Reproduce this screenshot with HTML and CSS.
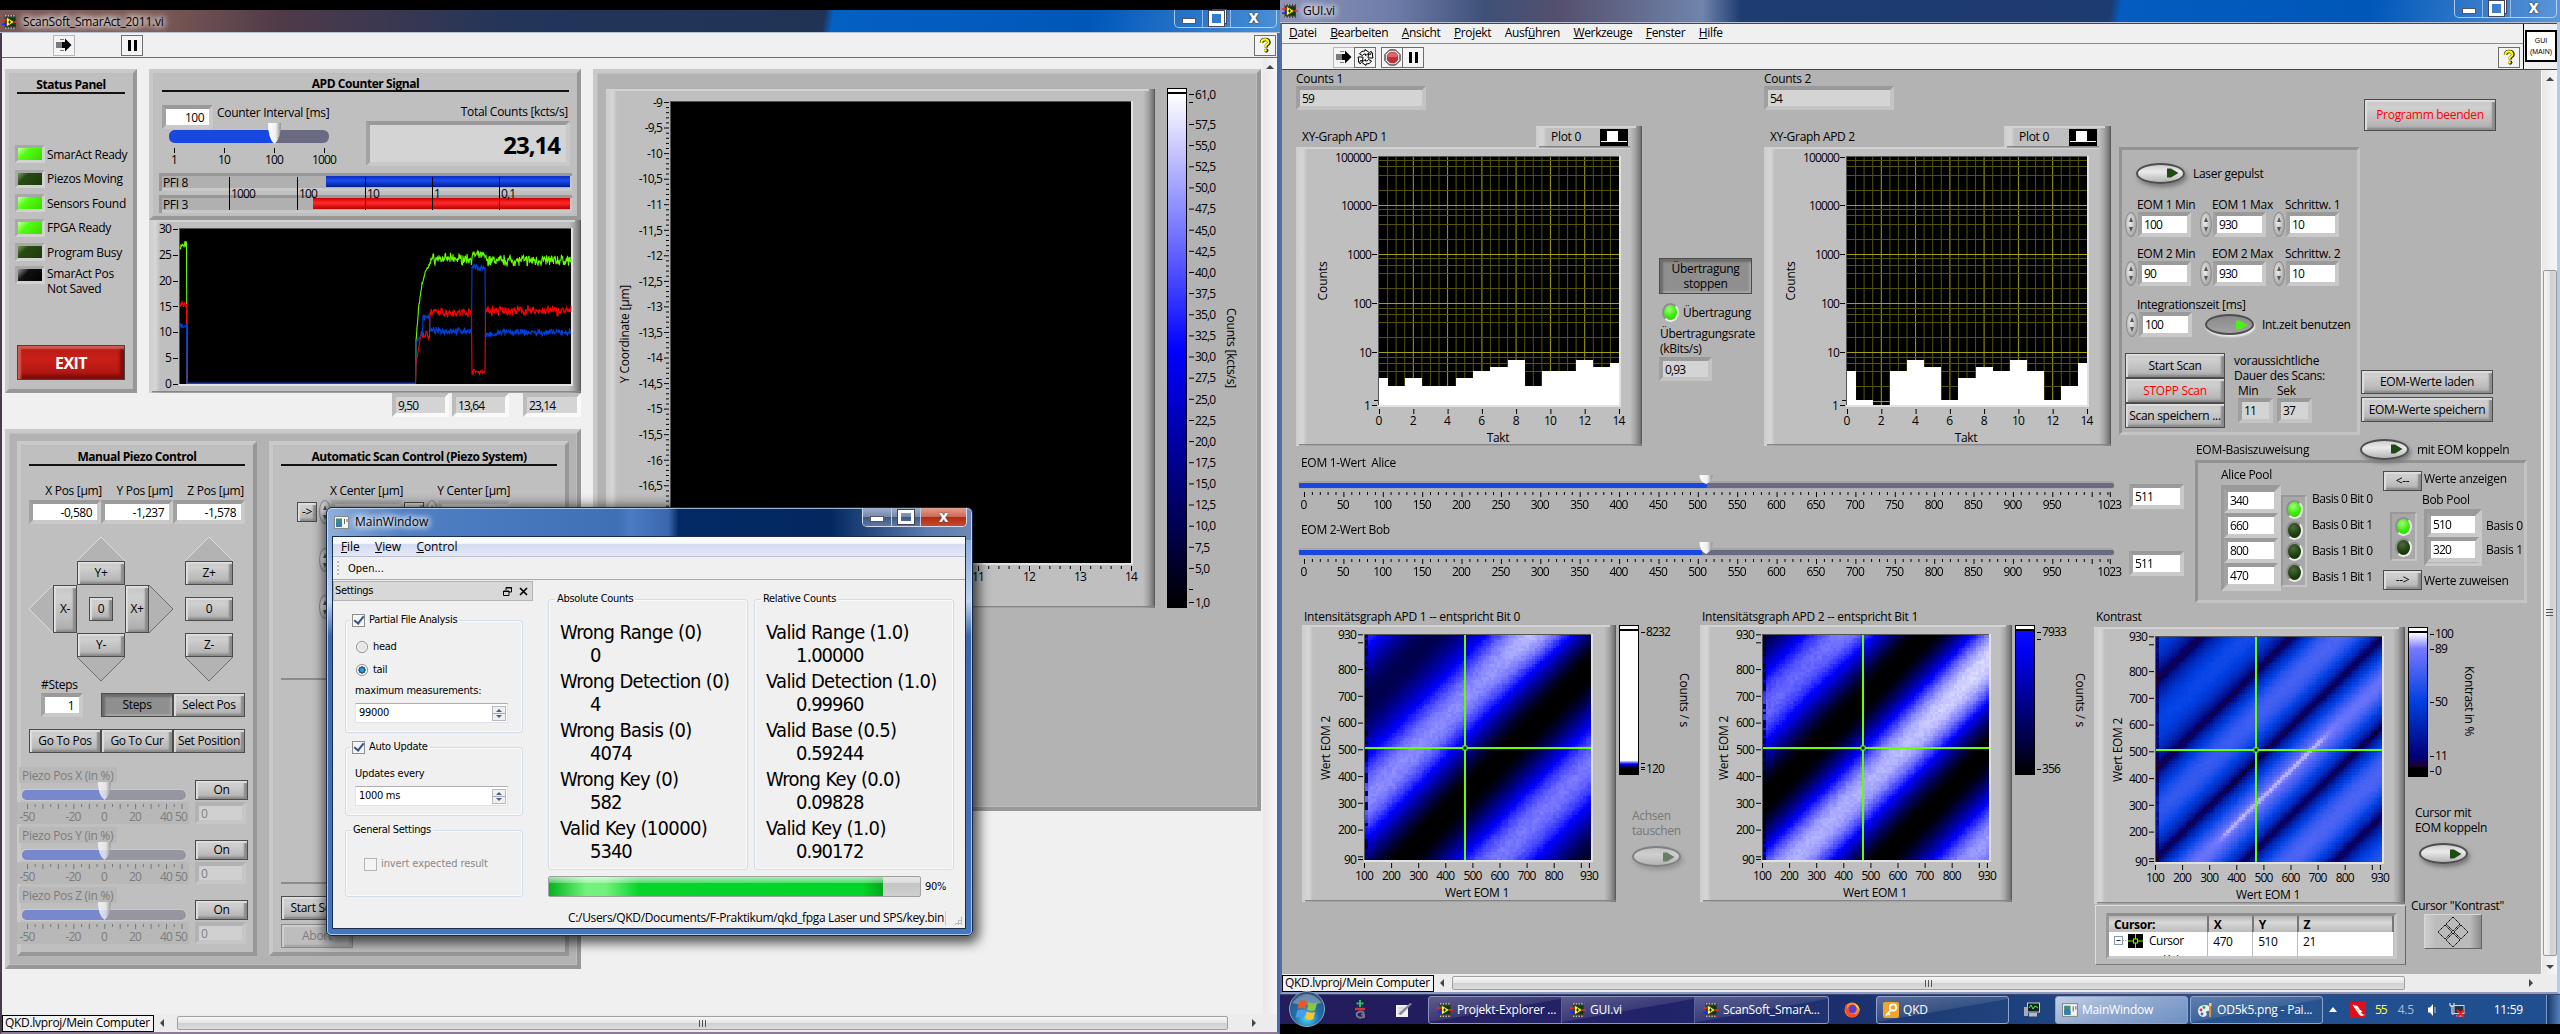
FILE: index.html
```html
<!DOCTYPE html>
<html lang="de">
<head>
<meta charset="utf-8">
<title>QKD Messplatz</title>
<link rel="stylesheet" href="styles.css">
</head>
<body>
<svg class="defs" width="0" height="0">
  <defs>
    <linearGradient id="frameL"><stop offset="0" stop-color="#cdcdcd"/><stop offset=".6" stop-color="#d6d6d6"/><stop offset="1" stop-color="#bfbfbf"/></linearGradient>
    <linearGradient id="frameR"><stop offset="0" stop-color="#bfbfbf"/><stop offset=".4" stop-color="#a6a6a6"/><stop offset=".85" stop-color="#787878"/><stop offset="1" stop-color="#505050"/></linearGradient>
    <linearGradient id="blueBar" x2="0" y2="1"><stop offset="0" stop-color="#0a2cc0"/><stop offset=".4" stop-color="#1c4cf0"/><stop offset="1" stop-color="#001f90"/></linearGradient>
    <linearGradient id="redBar" x2="0" y2="1"><stop offset="0" stop-color="#d00000"/><stop offset=".45" stop-color="#ff2a2a"/><stop offset="1" stop-color="#b80000"/></linearGradient>
    <linearGradient id="thumb"><stop offset="0" stop-color="#fff"/><stop offset=".6" stop-color="#f0f0f0"/><stop offset="1" stop-color="#8a8a8a"/></linearGradient>
    <linearGradient id="heatScale" x2="0" y2="1"><stop offset="0" stop-color="#fff"/><stop offset=".5" stop-color="#00f"/><stop offset="1" stop-color="#000"/></linearGradient>
    <linearGradient id="scaleBlue" x2="0" y2="1"><stop offset="0" stop-color="#0a0aff"/><stop offset=".15" stop-color="#0000f0"/><stop offset="1" stop-color="#000"/></linearGradient>
    <linearGradient id="scaleLow" x2="0" y2="1"><stop offset="0" stop-color="#fff"/><stop offset=".905" stop-color="#fff"/><stop offset=".93" stop-color="#00f"/><stop offset=".96" stop-color="#000"/><stop offset="1" stop-color="#000"/></linearGradient>
    <linearGradient id="scaleK" x2="0" y2="1"><stop offset="0" stop-color="#fff"/><stop offset=".11" stop-color="#7878ff"/><stop offset=".48" stop-color="#0040e0"/><stop offset=".86" stop-color="#000078"/><stop offset=".93" stop-color="#1c0038"/><stop offset=".94" stop-color="#000"/><stop offset="1" stop-color="#000"/></linearGradient>
    <radialGradient id="orb" cx=".5" cy=".75" r=".7"><stop offset="0" stop-color="#4fd8ff"/><stop offset=".5" stop-color="#1f6fa8"/><stop offset="1" stop-color="#30507c"/></radialGradient>
    <symbol id="vi" viewBox="0 0 16 16">
      <rect x="2.5" y="1" width="11.5" height="14" fill="#3a3a3a"/><path d="M3 1.8h11M3 14.2h11" stroke="#b8b8b8" stroke-width="1.6" stroke-dasharray="1.5 1.2"/>
      <rect x="7" y="4" width="6" height="8" fill="#0c3a0c"/>
      <path d="M4.5 3.2L12.4 8L4.5 12.8z" fill="#ff3" stroke="#330" stroke-width=".7"/><path d="M5.8 8h3.4M7.5 6.3v3.4" stroke="#222" stroke-width="1"/>
      <path d="M0 6h4.5M12 8h4" stroke="#f22" stroke-width="1.5"/><path d="M0 10.2h4.5" stroke="#22f" stroke-width="1.5"/>
    </symbol>
    <symbol id="run" viewBox="0 0 16 14"><path d="M1 4v6M3 4v6M5 1v1M5 4v6M5 12v1M7 1v1M7 12v1" stroke="#000" stroke-width="1"/><path d="M6 4h3V0.5L15.5 7L9 13.5V10H6z"/></symbol>
    <symbol id="help" viewBox="0 0 16 18"><path d="M4 6c0-3 2-4 4.5-4S13 3.500 12.500 6c-.3 1.800-2.500 2-3 3.200v2" fill="none" stroke="#222" stroke-width="4"/><circle cx="9.500" cy="14.800" r="2.400" fill="#222"/><path d="M3.800 6c0-3 2-4 4.300-4S12 3.500 11.800 6c-.3 1.800-2.600 2-3.200 3.200v1.800" fill="none" stroke="#ff0" stroke-width="2.400"/><circle cx="8.600" cy="14.500" r="1.500" fill="#ff0"/></symbol>
    <symbol id="app" viewBox="0 0 15 13"><rect x=".5" y=".5" width="14" height="12" fill="#f4f4f4" stroke="#888"/><rect x="2" y="2.500" width="6" height="8.500" fill="#3b8f7a"/><path d="M2 7l3-2 3 3v3H2z" fill="#3a7bb0"/><path d="M10.500 3v5M13 3v3" stroke="#666"/></symbol>
    <symbol id="toggleArrow" viewBox="0 0 14 12"><path d="M1 1.500L5 1.500L12.500 6L5 10.500L1 10.500z"/></symbol>
  </defs>
</svg>

<main class="desktop">
  <!-- ScanSoft window -->
  <section class="win scan">
    <header class="titlebar tb-left">
      <svg class="ico16"><use href="#vi"/></svg><span class="caption">ScanSoft_SmarAct_2011.vi</span>
      <div class="winbtns"><i class="min"></i><i class="res"></i><i class="cls">x</i></div>
    </header>
    <div class="toolbar">
      <b class="tool t-run soft"><svg width="16" height="14"><use href="#run"/></svg></b>
      <b class="tool t-pause"><i class="pause"></i></b>
      <b class="tool t-help"><svg width="14" height="17"><use href="#help"/></svg></b>
    </div>
    <div class="scan-body">
      <div class="scan-canvas">
        <div class="scan-left">
          <div class="row top-row">
            <div class="panel status">
              <h2>Status Panel</h2>
              <ul class="leds">
                <li><i class="led on"></i>SmarAct Ready</li>
                <li><i class="led"></i>Piezos Moving</li>
                <li><i class="led on"></i>Sensors Found</li>
                <li><i class="led on"></i>FPGA Ready</li>
                <li><i class="led"></i>Program Busy</li>
                <li class="two"><i class="led black"></i><span>SmarAct Pos<br>Not Saved</span></li>
              </ul>
              <button class="exit">EXIT</button>
            </div>
            <div class="apd-col">
              <div class="panel apd">
                <h2>APD Counter Signal</h2>
                <div class="row apd-row">
                  <div class="interval">
                    <div class="row"><span class="field white r w51">100</span><span class="lab">Counter Interval [ms]</span></div>
                    <svg id="intervalSlider" width="172" height="48"></svg>
                  </div>
                  <div class="total">
                    <span class="lab">Total Counts [kcts/s]</span>
                    <output class="field big">23,14</output>
                  </div>
                </div>
                <svg id="pfi" width="414" height="40"></svg>
              </div>
              <svg id="apdChart" width="432" height="173"></svg>
            </div>
          </div>
          <div class="row readouts">
            <output class="field lt w57">9,50</output><output class="field lt w57">13,64</output><output class="field lt w58 gap">23,14</output>
          </div>
          <div class="panel piezo">
            <div class="panel manual">
              <h2>Manual Piezo Control</h2>
              <div class="row pos-labels"><span>X Pos [µm]</span><span>Y Pos [µm]</span><span>Z Pos [µm]</span></div>
              <div class="row pos-fields"><span class="field white r">-0,580</span><span class="field white r">-1,237</span><span class="field white r">-1,578</span></div>
              <div class="pad">
                <svg class="a-yu" viewBox="0 0 48 24"><path d="M0 24L24 0L48 24"/></svg>
                <svg class="a-zu" viewBox="0 0 48 24"><path d="M0 24L24 0L48 24"/></svg>
                <button class="btn a-yp">Y+</button><button class="btn a-zp">Z+</button>
                <svg class="a-xl" viewBox="0 0 24 48"><path d="M24 0L0 24L24 48"/></svg>
                <button class="btn a-xm">X-</button><button class="btn a-o">0</button><button class="btn a-xp">X+</button>
                <svg class="a-xr" viewBox="0 0 24 48"><path d="M0 0L24 24L0 48"/></svg>
                <button class="btn a-z0">0</button>
                <button class="btn a-ym">Y-</button><button class="btn a-zm">Z-</button>
                <svg class="a-yd" viewBox="0 0 48 24"><path d="M0 0L24 24L48 0"/></svg>
                <svg class="a-zd" viewBox="0 0 48 24"><path d="M0 0L24 24L48 0"/></svg>
              </div>
              <div class="row steps-row">
                <label class="steps"><span>#Steps</span><span class="field white r">1</span></label>
                <button class="btn w72 pressed">Steps</button><button class="btn w72">Select Pos</button>
              </div>
              <div class="row go-row"><button class="btn w72">Go To Pos</button><button class="btn w72">Go To Cur</button><button class="btn w72">Set Position</button></div>
              <div class="piezo-sliders">
                <div class="row ps"><svg class="piezoSlider" data-axis="X" width="174" height="60"></svg><div class="ps-r"><button class="btn">On</button><span class="field dis">0</span></div></div>
                <div class="row ps"><svg class="piezoSlider" data-axis="Y" width="174" height="60"></svg><div class="ps-r"><button class="btn">On</button><span class="field dis">0</span></div></div>
                <div class="row ps"><svg class="piezoSlider" data-axis="Z" width="174" height="60"></svg><div class="ps-r"><button class="btn">On</button><span class="field dis">0</span></div></div>
              </div>
            </div>
            <div class="panel auto">
              <h2>Automatic Scan Control (Piezo System)</h2>
              <div class="row centers"><span>X Center [µm]</span><span>Y Center [µm]</span></div>
              <div class="row center-fields"><button class="btn">-&gt;</button><i class="spin"></i><span class="field dis"></span><button class="btn">-&gt;</button><i class="spin"></i><span class="field dis"></span></div>
              <i class="spin solo"></i><i class="spin solo two"></i>
              <hr><hr class="second">
              <button class="btn start">Start Scan</button>
              <button class="btn start off">Abort</button>
            </div>
          </div>
        </div>
        <div class="panel heat"><svg id="bigMap" width="660" height="734"></svg></div>
      </div>
      <div class="vscroll"><i class="up"></i></div>
    </div>
    <footer class="status-row"><span class="proj">QKD.lvproj/Mein Computer</span><i class="arr l"></i><i class="hthumb h1"></i><i class="arr r"></i></footer>
  </section>

  <!-- GUI window -->
  <section class="win gui">
    <header class="titlebar tb-right">
      <svg class="ico16"><use href="#vi"/></svg><span class="caption">GUI.vi</span>
      <div class="winbtns"><i class="min"></i><i class="res"></i><i class="cls">x</i></div>
    </header>
    <div class="gui-head">
      <div class="gui-bars">
        <nav class="menu"><span><u>D</u>atei</span><span><u>B</u>earbeiten</span><span><u>A</u>nsicht</span><span><u>P</u>rojekt</span><span>Ausf<u>ü</u>hren</span><span><u>W</u>erkzeuge</span><span><u>F</u>enster</span><span><u>H</u>ilfe</span></nav>
        <div class="toolbar g">
          <b class="tool soft"><svg width="16" height="14"><use href="#run"/></svg></b>
          <b class="tool"><svg width="17" height="17" viewBox="0 0 17 17" fill="none" stroke="#000" stroke-width="1"><path d="M2.500 5Q4 1.500 8 2V.5l4.500 3.200L8.500 6.500V5Q6.500 4.500 5.500 6.500zM14.500 12Q13 15.500 9 15v1.500L4.500 13.300 8.500 10.500V12Q10.500 12.500 11.500 10.500zM1 8h5l-.5 4-2-.5Q2 13.500 3.500 15 .5 13.500 1.500 10zM16 9h-5l.5-4 2 .5Q15 3.500 13.500 2 16.500 3.500 15.500 7z"/></svg></b>
          <b class="tool stop"><svg width="17" height="17" viewBox="0 0 17 17"><path d="M5.500 1h6L16 5.500v6L11.500 16h-6L1 11.500v-6z" fill="#fff" stroke="#000"/><path d="M6 2.800h5L14.200 6v5L11 14.200H6L2.800 11V6z" fill="#c03038"/><path d="M6 3.500h5L13.500 6v2h-10V6z" fill="#d86a6a"/></svg></b>
          <b class="tool"><i class="pause"></i></b>
          <b class="tool t-help"><svg width="14" height="17"><use href="#help"/></svg></b>
        </div>
      </div>
      <div class="vi-icon"><div>GUI<br>(MAIN)</div></div>
    </div>
    <div class="gui-body">
      <div class="gui-canvas">
        <div class="row g1">
          <div class="graph-col"><span class="lab">Counts 1</span><output class="field lt w130">59</output><svg id="xy1" width="347" height="320"></svg></div>
          <div class="transfer">
            <button class="btn pressed">Übertragung<br>stoppen</button>
            <span class="row"><i class="round on"></i>Übertragung</span>
            <p>Übertragungsrate<br>(kBits/s)</p>
            <output class="field lt">0,93</output>
          </div>
          <div class="graph-col"><span class="lab">Counts 2</span><output class="field lt w130">54</output><svg id="xy2" width="348" height="320"></svg></div>
          <div class="laser">
            <div class="row tg"><i class="toggle"><svg><use href="#toggleArrow"/></svg></i>Laser gepulst</div>
            <div class="triple labs"><span>EOM 1 Min</span><span>EOM 1 Max</span><span>Schrittw. 1</span></div>
            <div class="triple"><span class="num"><i class="spin"></i><b class="field white">100</b></span><span class="num"><i class="spin"></i><b class="field white">930</b></span><span class="num"><i class="spin"></i><b class="field white">10</b></span></div>
            <div class="triple labs l2"><span>EOM 2 Min</span><span>EOM 2 Max</span><span>Schrittw. 2</span></div>
            <div class="triple"><span class="num"><i class="spin"></i><b class="field white">90</b></span><span class="num"><i class="spin"></i><b class="field white">930</b></span><span class="num"><i class="spin"></i><b class="field white">10</b></span></div>
            <div class="triple labs l3"><span>Integrationszeit [ms]</span></div>
            <div class="row integ"><span class="num"><i class="spin"></i><b class="field white">100</b></span><i class="toggle down"><svg><use href="#toggleArrow"/></svg></i>Int.zeit benutzen</div>
            <div class="row scanrow">
              <div class="scanbtns"><button class="btn">Start Scan</button><button class="btn red">STOPP Scan</button><button class="btn">Scan speichern ...</button></div>
              <div class="dur"><p>voraussichtliche<br>Dauer des Scans:</p><div class="row"><label>Min<output class="field lt">11</output></label><label>Sek<output class="field lt">37</output></label></div></div>
            </div>
          </div>
          <div class="rightbtns"><button class="btn red quit">Programm beenden</button><button class="btn load">EOM-Werte laden</button><button class="btn save">EOM-Werte speichern</button></div>
        </div>
        <div class="row g2">
          <div class="eom">
            <div class="row"><svg class="eomSlider" data-label="EOM 1-Wert  Alice" data-h="9" width="833" height="67"></svg><span class="field white">511</span></div>
            <div class="row"><svg class="eomSlider" data-label="EOM 2-Wert Bob" data-h="12" width="833" height="67"></svg><span class="field white">511</span></div>
          </div>
          <div class="basis">
            <div class="row bhead"><span>EOM-Basiszuweisung</span><i class="toggle"><svg><use href="#toggleArrow"/></svg></i><span>mit EOM koppeln</span></div>
            <div class="row bpanel">
              <div class="alice"><span>Alice Pool</span><div class="cluster"><b class="field white">340</b><b class="field white">660</b><b class="field white">800</b><b class="field white">470</b></div></div>
              <div class="ledbox a4"><i class="round on"></i><i class="round"></i><i class="round"></i><i class="round"></i></div>
              <div class="blabs"><span>Basis 0 Bit 0</span><span>Basis 0 Bit 1</span><span>Basis 1 Bit 0</span><span>Basis 1 Bit 1</span></div>
              <div class="bob">
                <div class="row"><button class="btn">&lt;--</button><span>Werte anzeigen</span></div>
                <span class="bobt">Bob Pool</span>
                <div class="row bobrow"><div class="ledbox"><i class="round on"></i><i class="round"></i></div><div class="cluster"><b class="field white">510</b><b class="field white">320</b></div><div class="b2"><span>Basis 0</span><span>Basis 1</span></div></div>
                <div class="row zu"><button class="btn">--&gt;</button><span>Werte zuweisen</span></div>
              </div>
            </div>
          </div>
        </div>
        <div class="row g3">
          <div class="map" data-map="1"><svg class="base" width="315" height="298"></svg><canvas></canvas><svg class="over" width="315" height="298"></svg></div>
          <div class="side s1"><svg id="bar1" width="83" height="175"></svg><p class="dim">Achsen<br>tauschen</p><i class="toggle dimt"><svg><use href="#toggleArrow"/></svg></i></div>
          <div class="map" data-map="2"><svg class="base" width="313" height="298"></svg><canvas></canvas><svg class="over" width="313" height="298"></svg></div>
          <div class="side s2"><svg id="bar2" width="83" height="175"></svg></div>
          <div class="kcol">
            <div class="map" data-map="3"><svg class="base" width="312" height="299"></svg><canvas></canvas><svg class="over" width="312" height="299"></svg></div>
            <div class="ctable">
              <table><thead><tr><th>Cursor:</th><th>X</th><th>Y</th><th>Z</th></tr></thead>
              <tbody><tr><td><svg width="30" height="16"><rect x=".5" y="3.500" width="8" height="8" fill="#fff" stroke="#8a9ab0"/><path d="M2.500 7.500h4" stroke="#226"/><path d="M9 7.500h4" stroke="#999" stroke-dasharray="1 1"/><rect x="14" y="1" width="15" height="14"/><path d="M21.500 1v14M14 8h15" stroke="#6f0"/><rect x="19.500" y="6" width="4" height="4" stroke="#6f0"/></svg>Cursor</td><td>470</td><td>510</td><td>21</td></tr><tr class="cut"><td>Kein</td><td></td><td></td><td></td></tr></tbody></table>
            </div>
          </div>
          <div class="side s3"><svg id="bar3" width="90" height="180"></svg><p>Cursor mit<br>EOM koppeln</p><i class="toggle"><svg><use href="#toggleArrow"/></svg></i><p class="ck">Cursor "Kontrast"</p>
            <div class="cpad"><svg width="32" height="32" viewBox="0 0 32 32" fill="none" stroke="#000" stroke-dasharray="1.500 .5"><path d="M16 1l7 7-7 7-7-7zM16 17l7 7-7 7-7-7zM8 9l7 7-7 7-7-7zM24 9l7 7-7 7-7-7z"/></svg></div></div>
        </div>
      </div>
      <div class="vscroll g"><i class="up"></i><i class="vthumb"></i><i class="dn"></i></div>
    </div>
    <footer class="status-row g"><span class="proj">QKD.lvproj/Mein Computer</span><i class="arr l"></i><i class="hthumb h2"></i><i class="arr r"></i></footer>
  </section>

  <!-- Taskbar -->
  <footer class="taskbar">
    <svg class="orb" width="38" height="34" viewBox="0 0 38 34"><circle cx="19" cy="18" r="17.500" fill="url(#orb)" stroke="#8ab" stroke-width="1"/><path d="M4 12Q19-6 34 12Q19 16 4 12z" fill="#fff" opacity=".3"/><path d="M11 10.500q4-2.500 8 0l-1.500 7.500q-4-2-8 0z" fill="#e8562a"/><path d="M20.500 11q4 2.500 8.500.5l-1.700 7.500q-4 2-8.300-.5z" fill="#8cc63f"/><path d="M9.200 19.500q4-2 8 .3l-1.600 7.200q-4-2-8 0z" fill="#4a9be8"/><path d="M18.800 20.500q4 2.300 8.200.5l-1.500 7q-4 2-8.300-.5z" fill="#fdc22d"/></svg>
    <svg class="q1" width="14" height="20" viewBox="0 0 14 20"><path d="M7 0v7M3.500 3.500h7" stroke="#2fbf5f" stroke-width="2"/><path d="M2 9h10" stroke="#d33" stroke-width="2.500"/><path d="M11 13a4 3 0 1 0-1 4h1v-2.500H8" fill="none" stroke="#778" stroke-width="2"/></svg>
    <svg class="q2" width="18" height="16" viewBox="0 0 18 16"><rect x="1" y="3" width="12" height="12" fill="#f2f2f2"/><path d="M3 12L15 1l2 1L6 13z" fill="#889"/><path d="M3 6h6M3 9h4" stroke="#bbb"/></svg>
    <div class="tgroup"><span class="tb"><svg class="ico16"><use href="#vi"/></svg>Projekt-Explorer ...</span><span class="tb"><svg class="ico16"><use href="#vi"/></svg>GUI.vi</span><span class="tb"><svg class="ico16"><use href="#vi"/></svg>ScanSoft_SmarA...</span></div>
    <svg class="ff" width="16" height="16" viewBox="0 0 16 16"><circle cx="8" cy="8" r="7.500" fill="#ff8a1c"/><circle cx="8.500" cy="7" r="4.200" fill="#5b3fd0"/><path d="M1 4Q0 14 8 15.500Q15 15 15.500 8Q14 13 9 12Q4 11 5 7Q2 7 3 2z" fill="#ff4a2a"/><path d="M10 1q6 3 5.500 8-1-3-3-4z" fill="#ffd43a"/></svg>
    <span class="tb solo"><svg class="ico16" viewBox="0 0 16 16"><rect width="16" height="16" rx="2" fill="#f0a52c"/><circle cx="10" cy="5.500" r="3.200" fill="none" stroke="#fff" stroke-width="1.800"/><path d="M8 8l-5 5.500M5 11l1.800 1.800" stroke="#fff" stroke-width="1.800"/></svg>QKD</span>
    <svg class="mon" width="16" height="16" viewBox="0 0 16 16"><rect x="3.500" y="1" width="12" height="9" fill="#122" stroke="#ccc"/><path d="M5 6l2-3 2 4 2-3 3 2" stroke="#4f4" fill="none"/><rect x="0" y="5" width="4" height="9" fill="#aab"/><rect x="5" y="11" width="8" height="3.500" fill="#bbb"/></svg>
    <span class="tb solo act"><svg class="ico16"><use href="#app"/></svg>MainWindow</span>
    <span class="tb solo p"><svg class="ico16" viewBox="0 0 16 16"><path d="M1 9q0-6 7-6 5 0 5 4 0 2-3 2-2 1 0 3-1 3-4 3-5-1-5-6z" fill="#e8eef6"/><circle cx="4" cy="8" r="1.400" fill="#d33"/><circle cx="7" cy="5.500" r="1.400" fill="#2a2"/><circle cx="5" cy="12" r="1.400" fill="#36c"/><path d="M13 3v12" stroke="#e8902a" stroke-width="2"/><path d="M12 1h2.500v3H12z" fill="#fc6"/></svg>OD5k5.png - Pai...</span>
    <div class="tray"><i class="tri"></i><svg width="16" height="16" viewBox="0 0 16 16"><rect width="16" height="16" fill="#e10f1a"/><path d="M3 3l9 7M4 4q4 0 5 4t4 5q-3 1-4-2l-5-7" fill="none" stroke="#fff" stroke-width="1.300"/></svg><span class="ty">55</span><span class="tg2">4.5</span>
      <svg class="spk" width="9" height="14" viewBox="0 0 9 14"><path d="M1 4.500h2L6 1v12L3 9.500H1z" fill="#fff"/><path d="M8 4v6" stroke="#bcd"/></svg>
      <svg class="net" width="16" height="16" viewBox="0 0 16 16"><path d="M1 1v3h4V1M3 4v8h2" stroke="#fff" fill="none"/><rect x="5" y="3.500" width="10" height="8" fill="#234" stroke="#ddd"/><path d="M7 14h6" stroke="#ddd"/><path d="M8 8l7 7M15 8l-7 7" stroke="#e22" stroke-width="2"/></svg>
      <span class="clock">11:59</span><i class="show"></i></div>
  </footer>

  <!-- MainWindow -->
  <section class="mw">
    <header class="mw-title"><svg width="15" height="13"><use href="#app"/></svg><span class="caption">MainWindow</span><div class="mwbtns"><i class="min"></i><i class="max"></i><i class="cls">x</i></div></header>
    <div class="mw-client">
      <nav class="mw-menu"><span><u>F</u>ile</span><span><u>V</u>iew</span><span><u>C</u>ontrol</span></nav>
      <div class="mw-tool"><i class="grip"></i>Open...</div>
      <div class="mw-main">
        <aside class="dock">
          <div class="dock-title"><span>Settings</span><svg width="9" height="9" fill="none" stroke="#000" stroke-width="1"><path d="M3 3V.5h5.500V5H6M3 1h5.500M.5 4h5.500v4.500H.5zM.5 4.500h5.500"/></svg><svg width="9" height="9" stroke="#000" stroke-width="1.700"><path d="M1 1l7 7M8 1L1 8"/></svg></div>
          <fieldset class="fs1"><legend><i class="chk on"></i>Partial File Analysis</legend>
            <label class="rad"><i></i>head</label><label class="rad sel"><i></i>tail</label>
            <span class="ml">maximum measurements:</span><div class="spinbox">99000<i></i></div></fieldset>
          <fieldset class="fs2"><legend><i class="chk on"></i>Auto Update</legend><span class="ml">Updates every</span><div class="spinbox">1000 ms<i></i></div></fieldset>
          <fieldset class="fs3"><legend>General Settings</legend><label class="inv"><i class="chk"></i>invert expected result</label></fieldset>
        </aside>
        <div class="results">
          <div class="row groups">
            <fieldset><legend>Absolute Counts</legend><dl><dt>Wrong Range (0)</dt><dd>0</dd><dt>Wrong Detection (0)</dt><dd>4</dd><dt>Wrong Basis (0)</dt><dd>4074</dd><dt>Wrong Key (0)</dt><dd>582</dd><dt>Valid Key (10000)</dt><dd>5340</dd></dl></fieldset>
            <fieldset><legend>Relative Counts</legend><dl><dt>Valid Range (1.0)</dt><dd>1.00000</dd><dt>Valid Detection (1.0)</dt><dd>0.99960</dd><dt>Valid Base (0.5)</dt><dd>0.59244</dd><dt>Wrong Key (0.0)</dt><dd>0.09828</dd><dt>Valid Key (1.0)</dt><dd>0.90172</dd></dl></fieldset>
          </div>
          <div class="row prog"><div class="bar"><i style="width:90%"></i></div><span>90%</span></div>
        </div>
      </div>
      <footer class="mw-status"><span>C:/Users/QKD/Documents/F-Praktikum/qkd_fpga Laser und SPS/key.bin</span><i class="size"></i></footer>
    </div>
  </section>
</main>
<script src="script.js"></script>
</body>
</html>
```
FILE: styles.css
```css
* { box-sizing: border-box; }
body { margin: 0; background: #000; font: 12px/15px "Open Sans", "Noto Sans", sans-serif; letter-spacing: -.3px; color: #000; font-variant-ligatures: none; }
h2, p, ul, dl, dd, fieldset { margin: 0; padding: 0; }
ul { list-style: none; }
i { font-style: normal; flex: none; }
b { font-weight: 400; }
svg { display: block; flex: none; overflow: visible; }
svg text { font: 12px "Open Sans", "Noto Sans", sans-serif; letter-spacing: -.3px; white-space: pre; font-variant-ligatures: none; }
svg text.n { letter-spacing: -.85px; }
svg text.off { fill: #7c7c7c; }
.defs { position: absolute; }
.row { display: flex; }
span, label, legend, dt, dd, button { white-space: nowrap; }
.desktop { position: relative; width: 2560px; height: 1034px; overflow: hidden; background: #000; }
.win { position: absolute; display: flex; flex-direction: column; background: #f0f0f0; }
.scan { left: 0; top: 10px; width: 1280px; height: 1024px; border-left: 2px solid #4a3a4c; border-right: 3px solid #3d6fb4; border-bottom: 2px solid #8c7a96; }
.gui { left: 1280px; top: 0; width: 1280px; height: 994px; border-left: 2px solid #5a6c98; border-right: 3px solid #b8cbe6; border-bottom: 2px solid #8a9ac0; }
.ico16 { width: 16px; height: 16px; }

/* title bars */
.titlebar { flex: none; height: 23px; display: flex; align-items: flex-start; padding: 4px 0 0 0; border-bottom: 1px solid #b9c0d0; position: relative; }
.tb-left { margin-left: -2px; margin-right: -3px; padding-left: 2px; background: linear-gradient(100deg, transparent 64.3%, #0560c4 65%, #0057b8 85%, #4a90d8 100%), linear-gradient(90deg, #7a5a58 0, #7c5a56 12%, #4f3a48 22%, #22355a 40%, #20304e 100%); }
.tb-right { margin-left: -2px; margin-right: -3px; padding: 3px 0 0 2px; background: linear-gradient(100deg, transparent 64.8%, #045cc0 65.6%, #0057b8 85%, #5c96d8 100%), linear-gradient(90deg, #8d93b8 0, #6d7ca8 9%, #3f5078 16%, #55506e 22%, #7084ac 33%, #1f3c70 36%, #1c386c 100%); }
.caption { margin-left: 5px; font-size: 12px; line-height: 16px; letter-spacing: -.2px; text-shadow: 0 0 7px #fff, 0 0 7px #fff, 0 0 9px rgba(255,255,255,.8), 0 0 10px rgba(255,255,255,.7); }
.winbtns { margin: -4px 3px 0 auto; width: 103px; height: 18px; display: flex; border: 1px solid rgba(215,230,250,.75); border-top: 0; border-radius: 0 0 5px 5px; }
.tb-right .winbtns { margin-top: -3px; }
.winbtns i { display: flex; align-items: center; justify-content: center; color: #fff; border-right: 1px solid rgba(215,230,250,.6); width: 28px; }
.winbtns .cls { flex: 1; border: 0; font: 700 17px/12px "Open Sans", sans-serif; text-shadow: 0 0 2px #333, 0 0 1px #333; padding-bottom: 4px; }
.min::before { content: ""; width: 12px; height: 4px; margin-top: 4px; background: #fff; border: 1px solid #556; }
.res::before { content: ""; width: 9px; height: 9px; border: 3px solid #fff; outline: 1px solid #445; box-shadow: 3px -2px 0 -1px #fff, 3px -2px 0 0 #445; }

/* toolbars */
.toolbar { flex: none; height: 25px; display: flex; align-items: center; border-bottom: 1px solid #6c6c6c; background: #f1f0f0; }
.tool { width: 22px; height: 21px; border: 1px solid #6e6e6e; display: flex; align-items: center; justify-content: center; background: #f4f4f4; }
.tool.soft { border-color: #b8b8b8; }
.t-run { margin-left: 51px; }
.t-pause { margin-left: 46px; }
.t-help { margin-left: auto; margin-right: 1px; }
.pause { width: 9px; height: 11px; border: solid #000; border-width: 0 3px; }
.gui-head { flex: none; display: flex; height: 47px; border-top: 1px solid #2c4a7c; border-bottom: 1px solid #444; }
.gui-bars { flex: 1; display: flex; flex-direction: column; }
.menu { height: 21px; display: flex; align-items: center; padding: 0 0 2px 7px; border-bottom: 1px solid #8c8c8c; gap: 13.5px; letter-spacing: -.35px; }
.toolbar.g { height: 25px; border: 0; padding-left: 51px; padding-top: 1px; }
.toolbar.g .tool + .tool { margin-left: -1px; }
.toolbar.g .tool.stop { margin-left: 5px; }
.toolbar.g .tool.t-help { margin-left: auto; margin-right: 3px; }
.vi-icon { width: 34px; border-left: 1px solid #000; background: #f0f0f0; padding-top: 6px; }
.vi-icon div { width: 32px; height: 32px; margin-left: 1px; border: 2px solid #000; background: #fff; text-align: center; font: 7px/11px "Liberation Sans", sans-serif; padding-top: 3px; letter-spacing: 0; }

/* panels, fields and buttons */
.panel { border: 4px solid; border-color: #c9c9c9 #989898 #989898 #c9c9c9; background: #bfbfbf; box-shadow: inset 0 0 0 1px #bdbdbd; outline: 0; }
.panel h2 { flex: none; margin: 4px 8px 0; height: 17px; border-bottom: 2px solid #111; font-size: 12px; line-height: 15px; font-weight: 700; text-align: center; letter-spacing: -.43px; }
.field { display: block; height: 24px; border: 4px solid; border-color: #9a9a9a #c9c9c9 #c9c9c9 #a2a2a2; background: #d4d4d4; padding: 0 2px; line-height: 17px; letter-spacing: -.85px; flex: none; }
.field.white { background: #fff; }
.field.r { text-align: right; padding-right: 5px; letter-spacing: -.5px; }
.field.dis { background: #d0d0d0; color: #808080; border-color: #b2b2b2 #c6c6c6 #c6c6c6 #b2b2b2; }
.w51 { width: 51px; } .w57 { width: 57px; } .w58 { width: 58px; } .w72 { width: 72px; } .w130 { width: 130px; }
.btn { height: 24px; border: 1px solid #4c4c4c; border-radius: 0; padding: 0; background: linear-gradient(#c6c6c6, #cfcfcf 25%, #bababa 75%, #a8a8a8); box-shadow: inset 2px 2px 1px #dedede, inset -3px -2px 2px #8a8a8a; font: 12px/14px "Open Sans", sans-serif; font-variant-ligatures: none; letter-spacing: -.3px; text-align: center; color: #000; flex: none; }
.btn.pressed { background: #8f8f8f; box-shadow: inset 3px 3px 2px #6c6c6c, inset -2px -2px 2px #a5a5a5; }
.btn.red { color: #f00; }
.btn.off { color: #7d7d7d; border-color: #8a8a8a; box-shadow: inset 2px 2px 1px #cfcfcf, inset -3px -2px 2px #a5a5a5; background: #bdbdbd; }
.spin { width: 12px; height: 25px; background: radial-gradient(ellipse at 40% 40%, #eee, #a9a9a9 70%, #777); border-radius: 50%; border: 1px solid #8c8c8c; display: flex; flex-direction: column; align-items: center; justify-content: center; gap: 5px; }
.spin::before, .spin::after { content: ""; border: 2.5px solid transparent; border-top-width: 0; border-bottom: 5px solid #555; }
.spin::after { border-bottom: 0; border-top: 5px solid #555; }
.round { width: 17px; height: 19px; border-radius: 50%; border: 2px solid #8e8e8e; border-right-color: #eee; border-bottom-color: #eee; background: radial-gradient(circle at 40% 30%, #4a6a3a, #1c3c0c 60%, #102800); }
.round.on { background: radial-gradient(circle at 40% 30%, #a0ff80, #3fee08 50%, #28c800); }
.toggle { width: 49px; height: 21px; border-radius: 50%; border: 2px solid #4e4e4e; background: linear-gradient(#cfcfcf, #eaeaea 40%, #b5b5b5); box-shadow: 2px 3px 4px #777; display: flex; align-items: center; justify-content: flex-end; padding-right: 3px; }
.toggle svg { width: 14px; height: 12px; fill: #1f4a14; }
.toggle.down { background: linear-gradient(#8a8a8a, #a2a2a2); box-shadow: 1px 2px 2px #eee; }
.toggle.down svg { fill: #4cf014; }
.toggle.dimt { opacity: .5; }

/* ScanSoft front panel */
.scan-body { flex: 1; display: flex; min-height: 0; }
.scan-canvas { width: 1261px; display: flex; padding: 11px 0 0 3px; gap: 12px; align-items: flex-start; }
.scan-left { width: 576px; }
.top-row { gap: 12px; }
.status { width: 132px; height: 324px; display: flex; flex-direction: column; }
.leds { margin: 48px 0 0 6px; }
.leds li { height: 24.5px; display: flex; align-items: center; gap: 2px; }
.leds .two { align-items: flex-start; padding-top: 1px; }
.led { width: 30px; height: 18px; border: 3px solid; border-color: #a8a8a8 #d2d2d2 #d2d2d2 #a8a8a8; background: linear-gradient(135deg, #6b8d55 5%, #2a4a14 30%, #1c3a08); }
.led.on { background: linear-gradient(135deg, #baff9a 5%, #52ff10 35%, #3cd800); }
.led.black { background: linear-gradient(135deg, #888 5%, #111 35%, #000); }
.exit { margin: auto 8px 9px; width: 108px; height: 35px; flex: none; border: 1px solid #444; background: linear-gradient(#b51a14, #c81f18 40%, #a91410); box-shadow: inset 3px 3px 2px #cf5a50, inset -4px -4px 3px #7c0d0a; color: #fff; font: 700 16px/20px "Open Sans", sans-serif; letter-spacing: -.6px; padding: 0; }
.apd { width: 432px; height: 151px; display: flex; flex-direction: column; }
.apd h2 { margin-top: 3px; margin-left: 9px; margin-right: 8px; height: 16px; }
.apd-row { height: 81px; }
.interval { width: 208px; padding: 13px 0 0 9px; }
.interval .lab { margin-left: 4px; }
.interval svg { margin-top: -9px; margin-left: 5px; }
.total { width: 204px; margin-left: auto; margin-right: 7px; display: flex; flex-direction: column; padding-top: 12px; }
.total .lab { align-self: flex-end; margin-right: 2px; }
.big { height: 45px; margin-top: 2px; text-align: right; font-weight: 700; font-size: 24px; line-height: 40px; padding-right: 6px; letter-spacing: -1px; }
#pfi { margin: 0 0 0 6px; }
.readouts { justify-content: flex-end; gap: 3px; height: 24px; }
.readouts .gap { margin-left: 11px; }
.lt { border-color: #a8a8a8 #e0e0e0 #e0e0e0 #a8a8a8; }
.readouts .lt { border-color: #bcbcbc #fafafa #fafafa #bcbcbc; line-height: 18px; }
.gui .lt { border-color: #999 #c4c4c4 #c4c4c4 #a0a0a0; }
.piezo { margin-top: 12px; height: 540px; padding: 8px; display: flex; gap: 12px; background: #b3b3b3; }
.piezo .panel { height: 515px; display: flex; flex-direction: column; }
.manual { width: 240px; }
.pos-labels { margin: 17px 0 2px 10px; }
.pos-labels span { width: 71px; text-align: right; }
.pos-fields { margin-left: 8px; }
.pos-fields span { width: 72px; }
.pad { margin: 13px 0 0 8px; display: grid; grid-template-columns: 24px 24px 48px 24px 24px 12px 48px; grid-template-rows: 24px 24px 48px 24px 24px; }
.pad svg { width: 100%; height: 100%; fill: #b3b3b3; stroke: #dcdcdc; stroke-width: 1; }
.pad .a-yd, .pad .a-zd, .pad .a-xr { stroke: #6d6d6d; }
.pad .btn { width: 100%; }
.a-yu { grid-area: 1/3; } .a-zu { grid-area: 1/7; } .a-yp { grid-area: 2/3; } .a-zp { grid-area: 2/7; }
.a-xl { grid-area: 3/1; } .pad .a-xm { grid-area: 3/2; height: 48px; } .pad .a-xp { grid-area: 3/4; height: 48px; } .a-xr { grid-area: 3/5; }
.pad .a-o { grid-area: 3/3; width: 24px; place-self: center; } .a-z0 { grid-area: 3/7; align-self: center; }
.a-ym { grid-area: 4/3; } .a-zm { grid-area: 4/7; } .a-yd { grid-area: 5/3; } .a-zd { grid-area: 5/7; }
.steps-row { margin: -4px 0 0 20px; align-items: flex-end; }
.steps { display: flex; flex-direction: column; width: 60px; }
.steps .field { width: 42px; }
.steps .field { margin-top: 1px; }
.go-row { margin: 12px 0 0 8px; }
.piezo-sliders { margin: 14px 0 0 -4px; }
.ps-r { margin-left: 4px; width: 53px; padding-top: 13px; display: flex; flex-direction: column; }
.ps-r .btn { height: 20px; }
.ps-r .field { height: 22px; margin: 2px 2px 0 0; line-height: 15px; }
.auto { width: 300px; }
.centers { margin: 17px 0 2px 57px; gap: 34px; }
.center-fields { margin-left: 24px; }
.center-fields .btn { width: 20px; height: 20px; margin-top: 2px; }
.center-fields .field { width: 73px; }
.center-fields .spin, .spin.solo { margin-left: 2px; height: 24px; }
.center-fields .spin + .field + .btn { margin-left: 0; }
.spin.solo { margin: 24px 0 0 46px; }
.spin.solo.two { margin-top: 23px; }
.auto hr { width: 277px; margin: 59px 0 0 8px; border: 0; border-top: 2px solid #8c8c8c; }
.auto hr.second { margin-top: 202px; }
.auto .start { width: 72px; margin: 12px 0 0 8px; }
.auto .start.off { margin-top: 4px; }
.heat { width: 668px; height: 742px; background: #b3b3b3; flex: none; }
.vscroll { margin-left: auto; width: 14px; background: linear-gradient(90deg, #e8e8e8, #f6f6f6); display: flex; flex-direction: column; align-items: center; }
.up, .dn { border: 4px solid transparent; border-bottom: 4px solid #444; border-top: 0; margin-top: 7px; }
.dn { border-top: 4px solid #444; border-bottom: 0; margin: 0 0 4px; }
.status-row { flex: none; height: 18px; display: flex; align-items: center; background: #ececec; }
.proj { width: 152px; height: 17px; border: 1px solid #000; background: #f3f3f3; padding-left: 2px; line-height: 14px; letter-spacing: -.3px; }
.arr { border: 4px solid transparent; border-right: 4px solid #444; border-left: 0; margin-left: 6px; }
.arr.r { border-left: 4px solid #444; border-right: 0; }
.hthumb { height: 14px; border: 1px solid #a0a0a0; border-radius: 2px; background: linear-gradient(#f6f6f6, #e4e4e4 50%, #d0d0d0 52%, #dcdcdc); display: flex; align-items: center; justify-content: center; margin-left: 13px; }
.hthumb::before { content: ""; width: 8px; height: 7px; background: repeating-linear-gradient(90deg, #555 0 1px, transparent 1px 3px); }
.h1 { width: 1051px; } .h1 ~ .arr { margin-left: 24px; }
.h2 { width: 953px; margin-left: 8px; } .status-row.g .arr.r { margin-left: 124px; }

/* GUI front panel */
.gui-body { flex: 1; display: flex; min-height: 0; }
.gui-canvas { width: 1259px; background: #b3b3b3; }
.vscroll.g { width: 16px; border-left: 1px solid #f8f8f8; }
.vthumb { width: 14px; height: 686px; margin-top: auto; border: 1px solid #9a9a9a; border-radius: 2px; background: linear-gradient(90deg, #f6f6f6, #e6e6e6 50%, #cfcfcf 52%, #dadada); display: flex; align-items: center; justify-content: center; }
.vthumb::before { content: ""; width: 7px; height: 8px; background: repeating-linear-gradient(#555 0 1px, transparent 1px 3px); }
.vscroll.g .dn { margin-top: 9px; margin-bottom: 5px; }
.g1 { height: 368px; padding-left: 14px; }
.graph-col { width: 346px; flex: none; }
.graph-col .lab { display: block; padding-top: 1px; height: 16px; }
.graph-col svg { margin-top: 16px; }
.transfer { width: 122px; flex: none; padding: 188px 0 0 17px; }
.transfer .btn { width: 93px; height: 36px; display: block; line-height: 15px; }
.transfer .row { height: 19px; margin: 9px 0 0 3px; align-items: center; gap: 4px; }
.transfer p { margin: 4px 0 0 1px; white-space: nowrap; }
.transfer .field { width: 53px; margin-top: 1px; }
.laser { width: 241px; height: 288px; margin: 77px 0 0 9px; border: 3px solid; border-color: #929292 #c4c4c4 #c4c4c4 #929292; flex: none; }
.tg { height: 24px; align-items: center; gap: 8px; margin: 11px 0 0 14px; }
.triple { display: grid; grid-template-columns: 75px 73px 60px; margin-left: 3px; }
.labs { margin: 12px 0 0 15px; }
.labs.l2, .labs.l3 { margin-top: 9px; }
.labs.l3 { margin-top: 11px; }
.num { display: flex; }
.num .field { width: 53px; height: 25px; margin-left: 1px; }
.integ { align-items: center; margin-left: 4px; }
.integ .toggle { margin: 0 8px 0 13px; }
.scanrow { margin: 15px 0 0 3px; }
.scanbtns { display: flex; flex-direction: column; gap: 0; padding-top: 1px; }
.scanbtns .btn { width: 100px; height: 25px; }
.dur { margin-left: 9px; white-space: nowrap; padding-top: 1px; }
.dur .row { padding-left: 4px; }
.dur label { display: flex; flex-direction: column; width: 39px; }
.dur .field { width: 35px; height: 25px; }
.rightbtns { display: flex; flex-direction: column; width: 134px; }
.rightbtns .btn { width: 132px; margin-left: 1px; }
.rightbtns .quit { height: 32px; margin-top: 29px; margin-left: 4px; }
.rightbtns .load { margin-top: 239px; }
.rightbtns .save { margin-top: 3px; height: 25px; }
.g2 { height: 168px; padding-left: 14px; position: relative; }
.eom { width: 899px; padding-top: 17px; flex: none; }
.eom .row { height: 67px; }
.eom .field { width: 55px; height: 25px; margin-top: 29px; }
.bhead { height: 22px; align-items: center; }
.bhead .toggle { margin: 0 8px 0 56px; }
.bhead span:first-child { width: 109px; padding-left: 1px; }
.bpanel { width: 332px; height: 143px; border: 3px solid; border-color: #929292 #c4c4c4 #c4c4c4 #929292; }
.alice { margin: 4px 0 0 23px; }
.cluster { border: 3px solid; border-color: #9a9a9a #c9c9c9 #c9c9c9 #9a9a9a; }
.cluster .field { width: 54px; }
.alice .cluster { margin-top: 3px; width: 60px; }
.alice .cluster .field { height: 25px; }
.ledbox { border: 2px solid; border-color: #989898 #c4c4c4 #c4c4c4 #989898; background: #a8a8a8; display: flex; flex-direction: column; align-items: center; gap: 2px; width: 26px; padding-top: 3px; }
.a4 { height: 92px; margin-top: 32px; }
.blabs { display: flex; flex-direction: column; gap: 11px; margin: 28px 0 0 5px; width: 71px; letter-spacing: -.5px; }
.bob { padding-top: 8px; }
.bob .btn { width: 39px; height: 20px; margin-right: 2px; }
.bobt { display: block; margin: 1px 0 2px 39px; }
.bobrow { margin-left: 7px; }
.bobrow .ledbox { height: 49px; margin-top: 3px; width: 27px; }
.bobrow .cluster { margin-left: 7px; width: 58px; height: 57px; }
.bobrow .field { width: 52px; height: 25px; }
.b2 { display: flex; flex-direction: column; gap: 9px; padding: 9px 0 0 4px; }
.zu { margin-top: 4px; align-items: center; }
.g3 { padding-left: 20px; }
.map { display: grid; flex: none; }
.map > * { grid-area: 1/1; }
.map canvas { width: 226px; height: 225px; margin: 29px 0 0 63px; image-rendering: pixelated; }
.map[data-map="3"] canvas { margin: 31px 0 0 62px; }
.over { z-index: 1; }
.side { flex: none; }
.s1 p { margin: 27px 0 0 15px; line-height: 15px; }
.s1 .toggle { margin: 8px 0 0 15px; }
.s1 { width: 83px; } .s2 { width: 81px; }
.dim { color: #777; }
.s3 p { margin: 19px 0 0 9px; white-space: nowrap; }
.s3 .toggle { margin: 8px 0 0 13px; }
.s3 p.ck { margin: 34px 0 0 5px; }
.cpad { width: 58px; height: 35px; margin: 1px 0 0 18px; border: 1px solid; border-color: #d8d8d8 #666 #666 #d8d8d8; background: linear-gradient(90deg, #cfcfcf, #bbb 20%, #bbb 80%, #8c8c8c); display: flex; align-items: center; justify-content: center; }
.ctable { width: 311px; height: 60px; margin: 0 0 0 1px; border: 1px solid; border-color: #ddd #666 #777 #ddd; background: #b9b9b9; padding: 7px 9px 0 10px; }
.ctable table { border-collapse: collapse; table-layout: fixed; width: 291px; height: 46px; border: 3px solid; border-color: #8e8e8e #c8c8c8 #c8c8c8 #999; background: #fff; display: block; overflow: hidden; }
.ctable th { height: 16px; padding: 0 0 0 5px; text-align: left; font-weight: 700; line-height: 15px; background: linear-gradient(#b4b4b4, #d8d8d8 40%, #bcbcbc); border-right: 2px solid #777; }
.ctable td { height: 18px; line-height: 15px; padding: 0 0 0 5px; border-right: 1px solid #bbb; letter-spacing: -.5px; }
.ctable th:nth-child(1) { width: 99px; } .ctable th:nth-child(2), .ctable th:nth-child(3) { width: 45px; } .ctable th:nth-child(4) { width: 96px; }
.ctable td svg { display: inline-block; vertical-align: -4px; margin-right: 5px; }
.cut td:first-child { padding-left: 54px; }

/* Taskbar */
.taskbar { position: absolute; left: 1280px; top: 994px; width: 1280px; height: 30px; display: flex; align-items: center; background: linear-gradient(90deg, #241c5c, #1d1f66 30%, #1c2b6c 40%, #1a3a74 52%, #24508e 70%, #1f4f90); border-top: 1px solid #3c4670; color: #fff; font-size: 12px; }
.orb { margin: -4px 0 0 8px; }
.q1 { margin-left: 27px; } .q2 { margin-left: 28px; }
.tgroup { display: flex; margin-left: 15px; border: 1px solid #8f94bd; border-radius: 3px; overflow: hidden; }
.tb { width: 133px; height: 26px; display: flex; align-items: center; padding-left: 8px; gap: 4px; border-right: 1px solid #5a5f96; background: linear-gradient(170deg, rgba(255,255,255,.28), rgba(255,255,255,.12) 50%, rgba(255,255,255,.02) 52%); letter-spacing: -.2px; }
.tb:last-child { border: 0; }
.tb.solo { height: 28px; border: 1px solid #8fa4cc; border-radius: 3px; padding-left: 6px; }
.ff { margin: 0 16px 0 15px; }
.mon { margin: 0 15px; }
.tb.act { background: linear-gradient(160deg, #c2cfe4, #8fa8cf 50%, #6f90c2); }
.tb.p { margin-left: 2px; }
.tray { margin-left: auto; display: flex; align-items: center; height: 100%; width: 236px; }
.tri { border: 4px solid transparent; border-bottom: 5px solid #fff; border-top: 0; margin: 0 13px 0 5px; }
.ty { color: #ff3; margin-left: 9px; letter-spacing: -1px; } .tg2 { color: #aebccd; margin-left: 11px; }
.spk { margin-left: 13px; } .net { margin-left: 13px; }
.clock { margin-left: 29px; }
.show { margin-left: auto; width: 14px; height: 100%; border-left: 1px solid #7d9cc8; background: linear-gradient(90deg, #16386c, #5580b8); }

/* MainWindow */
.mw { position: absolute; left: 326px; top: 507px; width: 647px; height: 429px; border: 1px solid #14264a; border-radius: 6px 6px 5px 5px; padding: 0 6px 7px 5px; background: linear-gradient(90deg, #8fb0dc 0, #4f80c4 12%, #3f6fb4 45%, #4a7cc4 47%, #3a66ac 53%, #032a66 54.500%, #032860 78%, #5a7cae 93%, #6f88b4 100%) top/100% 32px no-repeat, linear-gradient(#6f9ad0, #bcd4f0 22%, #3c68ae 30%, #4577be 100%); box-shadow: inset 0 0 0 1px rgba(220,235,255,.7), 2px 3px 12px 4px rgba(0,0,0,.65); font: 11px/14px "DejaVu Sans Condensed", "DejaVu Sans", sans-serif; letter-spacing: -.3px; }
.mw-title { height: 28px; display: flex; align-items: center; padding-left: 2px; }
.mw-title .caption { font: 12px/16px "Open Sans", sans-serif; margin-left: 6px; letter-spacing: 0; }
.mwbtns { margin: 0 -1px 0 auto; align-self: flex-start; width: 105px; height: 19px; display: flex; border: 1px solid #cfdcf0; border-top: 0; border-radius: 0 0 5px 5px; overflow: hidden; color: #fff; }
.mwbtns i { width: 29px; border-right: 1px solid #c0cce0; display: flex; align-items: center; justify-content: center; background: linear-gradient(#9fb0cc, #7388ac 48%, #3f587f 50%, #5d789f); }
.mwbtns .max::before { content: ""; width: 10px; height: 8px; border: 3px solid #fff; outline: 1px solid #445; }
.mwbtns .cls { flex: 1; border: 0; background: linear-gradient(#e0a090, #cf6a56 48%, #b02a14 50%, #c84a2c); font: 700 16px/12px "Open Sans", sans-serif; padding-bottom: 3px; text-shadow: 0 0 2px #333; }
.mw-client { height: 393px; border: 1px solid #1b2c4c; background: #f0f0f0; display: flex; flex-direction: column; margin-top: 0; }
.mw-menu { flex: none; height: 20px; display: flex; align-items: center; gap: 15.5px; padding-left: 8px; font: 12px/16px "Open Sans", sans-serif; letter-spacing: -.1px; background: linear-gradient(#fff, #f4f6fc 35%, #d6dcf0 38%, #e2e8f6); border-bottom: 1px solid #b9bfcf; }
.mw-tool { flex: none; height: 23px; display: flex; align-items: center; border-bottom: 1px solid #a8a8a8; gap: 9px; padding: 2px 0 0 4px; letter-spacing: 0; }
.grip { width: 2px; height: 16px; background: repeating-linear-gradient(#bbb 0 2px, transparent 2px 4px); }
.mw-main { flex: 1; display: flex; }
.dock { width: 202px; }
.dock-title { height: 20px; margin-top: 1px; width: 200px; display: flex; align-items: center; border: 1px solid #b4b4b4; background: #d8d8d8; padding: 0 4px 0 0; gap: 7px; }
.dock-title span { margin-right: auto; padding-left: 1px; }
.mw fieldset { border: 1px solid #d2dce8; border-radius: 3px; box-shadow: inset 0 0 0 1px #fafafa; min-width: 0; }
.mw legend { display: flex; align-items: center; gap: 4px; padding: 0 2px; margin-left: 6px; height: 14px; }
.dock fieldset { width: 178px; margin-left: 12px; padding-left: 9px; }
.chk { width: 13px; height: 13px; border: 1px solid #8e8f8f; background: #f4f4f4; display: flex; align-items: center; justify-content: center; }
.chk.on::before { content: ""; width: 4px; height: 8px; border: solid #35508c; border-width: 0 2px 2px 0; transform: rotate(38deg); margin-top: -2px; }
.dock legend .chk { margin-left: 0; }
.dock legend { margin-left: -5px; }
.fs1 { margin-top: 12px; height: 120px; }
.rad { display: flex; align-items: center; gap: 5px; height: 14px; margin-top: 13px; margin-left: 1px; }
.rad.sel { margin-top: 9px; }
.rad i { width: 12px; height: 12px; border: 1px solid #8e8f8f; border-radius: 50%; background: #e6e6e6; box-shadow: inset 0 0 0 1px #fff; }
.rad.sel i { background: radial-gradient(circle, #2aa0d8 20%, #123a66 48%, #eee 54%); }
.ml { display: block; letter-spacing: -.2px; }
.fs1 .ml { margin-top: 7px; }
.fs2 .ml { margin-top: 13px; }
.spinbox { margin-top: 5px; width: 153px; height: 20px; background: #fff; border: 1px solid #e2e3ea; border-top-color: #abadb3; padding: 2px 1px 0 3px; display: flex; justify-content: space-between; }
.spinbox i { width: 14px; height: 15px; border: 1px solid #b8b8c0; background: linear-gradient(#f0f0f0 45%, #a8a8b0 46%, #a8a8b0 52%, #f0f0f0 53%); display: flex; flex-direction: column; align-items: center; justify-content: space-evenly; }
.spinbox i::before, .spinbox i::after { content: ""; border: 3px solid transparent; border-top: 0; border-bottom: 3px solid #4a5a9a; }
.spinbox i::after { border-bottom: 0; border-top: 3px solid #4a5a9a; }
.fs2 { margin-top: 7px; height: 76px; }
.fs3 { margin-top: 7px; height: 74px; }
.dock .fs3 legend { margin-left: -4px; }
.inv { display: flex; align-items: center; gap: 4px; margin: 20px 0 0 9px; color: #8a8a8a; letter-spacing: -.1px; }
.inv .chk { border-color: #b4b4b4; }
.results { flex: 1; padding: 12px 0 0 13px; }
.groups { gap: 6px; }
.groups fieldset { width: 200px; height: 278px; padding-top: 12px; }
.groups dt { font: 20px/23px "DejaVu Sans Condensed", sans-serif; padding: 3px 0 0 11px; letter-spacing: -.67px; height: 26px; }
.groups dd { font: 20px/23px "DejaVu Sans Condensed", sans-serif; padding-left: 41px; letter-spacing: -1px; height: 23px; }
.prog { margin-top: 6px; align-items: center; gap: 4px; }
.bar { width: 373px; height: 21px; border: 1px solid #a0a0a0; border-radius: 2px; background: linear-gradient(#e6e6e6, #dcdcdc 30%, #c4c4c4 32%, #d0d0d0); }
.bar i { display: block; height: 100%; background: linear-gradient(rgba(255,255,255,.65), rgba(255,255,255,.3) 30%, transparent 32%), linear-gradient(90deg, #02b41c, #70f27c 11%, #70f27c 17%, #06d42a 27%, #00d428 94%, #02a81c); }
.mw-status { flex: none; height: 23px; display: flex; align-items: center; justify-content: flex-end; padding-top: 3px; font: 12px/14px "Open Sans", sans-serif; letter-spacing: -.35px; }
.mw-status span { border-right: 1px solid #ccc; padding-right: 1px; }
.size { width: 8px; height: 9px; margin: 5px 3px 0 8px; background: radial-gradient(circle, #bbb 1px, transparent 1.200px) 0 0/3px 3px; clip-path: polygon(100% 0, 100% 100%, 0 100%); }
```
FILE: script.js
```js
const NS = 'http://www.w3.org/2000/svg';
let seed = 7;
const rnd = () => (seed = (seed * 16807) % 2147483647) / 2147483647;
const el = (s, tag, a, txt) => { const e = document.createElementNS(NS, tag); for (const k in a) e.setAttribute(k, a[k]); if (txt !== undefined) e.textContent = txt; s.appendChild(e); return e; };
const rect = (s, x, y, w, h, fill, o = {}) => el(s, 'rect', { x, y, width: w, height: h, fill, ...o });
const path = (s, d, stroke = '#000', o = {}) => el(s, 'path', { d, stroke, fill: 'none', ...o });
const text = (s, x, yc, t, anchor = 'start', cls = '', o = {}) => el(s, 'text', { x, y: yc + 4.3, 'text-anchor': anchor, class: cls, ...o }, t);
const rot = (s, x, y, t, deg, w) => { const o = { transform: `translate(${x} ${y}) rotate(${deg})` }; if (w) { o.textLength = w; o.lengthAdjust = 'spacing'; } text(s, 0, 0, t, 'middle', '', o); };

// raised graph frame with shaded edges
function frame(s, x, y, w, h) {
  rect(s, x, y, w, h, '#bfbfbf');
  rect(s, x, y, 11, h, 'url(#frameL)');
  rect(s, x + w - 12, y, 12, h, 'url(#frameR)');
  rect(s, x, y, w - 6, 2, '#d2d2d2');
  rect(s, x + 3, y + h - 2, w - 3, 1.5, '#858585');
}
function plotEdge(s, x, y, w, h) {
  rect(s, x - 1, y - 1, w + 3, h + 3, '#e2e2e2');
  rect(s, x - 1, y - 1, w + 1, h + 1, '#555');
  rect(s, x, y, w, h, '#000');
}
const thumb = (s, x, y, w, h, o = {}) => el(s, 'path', { d: `M${x} ${y}h${w}q0 ${h * .75} ${-w / 2} ${h}q${-w / 2} ${-h * .25} ${-w / 2} ${-h}z`, fill: 'url(#thumb)', ...o });

// counter interval slider
{
  const s = document.getElementById('intervalSlider');
  rect(s, 2, 10, 160, 13, '#6a6a82', { rx: 6 });
  el(s, 'path', { d: 'M8 10H108V23H8Q2 22 2 16.500Q2 11 8 10z', fill: '#1848e0' });
  thumb(s, 101, 3, 13, 21);
  [1, 10, 100, 1000].forEach((v, i) => { path(s, `M${7.5 + i * 50} 28v5`); text(s, 7 + i * 50, 39.500, v, 'middle', 'n'); });
}
// PFI count-rate bars
{
  const s = document.getElementById('pfi');
  [['PFI 8', 0, 167, 'blueBar'], ['PFI 3', 22, 154, 'redBar']].forEach(([t, y, x, g]) => {
    rect(s, 0, y, 413, 18, '#989898'); rect(s, 3, y + 3, 410, 15, '#c8c8c8'); rect(s, 3, y + 3, 408, 12, '#b0b0b0');
    rect(s, x, y + 3, 411 - x, 11, `url(#${g})`);
    text(s, 4, y + 10, t, 'start', '', { textLength: 25 });
  });
  [[70.5, '1000'], [138.5, '100'], [206.5, '10'], [273.500, '1'], [340.500, '0,1']].forEach(([x, t]) => { path(s, `M${x} 4V37`); text(s, x + 1.500, 20.5, t, 'start', 'n'); });
}
// counter history
{
  const s = document.getElementById('apdChart');
  frame(s, 0, 0, 432, 173);
  plotEdge(s, 31, 9, 391, 155);
  for (let v = 0; v <= 30; v += 5) { const y = 163.5 - v * 5.15; path(s, `M24 ${Math.round(y) + .5}h5`); text(s, 22, y, v, 'end', 'n'); }
  const Y = v => 163.5 - v * 5.15;
  const trace = (color, f) => { let d = ''; for (let x = 0; x <= 391; x += .5) { const v = f(x); if (v === null) continue; d += (d ? 'L' : 'M') + (31 + x) + ' ' + Y(v).toFixed(1); } path(s, d, color, { 'stroke-width': 1.1 }); };
  const nz = a => (rnd() + rnd() - 1) * a;
  trace('#66ff00', x => x < 7 ? 26.5 + nz(1) + x * .08 : x < 236 ? 0 : x < 250 ? 24 * (1 - Math.exp(-(x - 234) / 5)) + nz(.6) : x < 292 ? 24.2 + nz(1.2) : x < 306 ? 24.9 + nz(.9) : 23.9 + nz(1.3));
  trace('#ff0000', x => x < 7 ? 15.3 + nz(.8) : x < 236 ? 0 : x < 242 ? 4 + (x - 236) * 1.100 : x < 250 ? 9.5 + nz(1.100) : x < 292 ? 13.800 + nz(1) : x < 305.500 ? 2.300 + nz(.6) : 14.100 + nz(1.200));
  trace('#0040dd', x => x < 7 ? 11.2 + nz(.6) : x < 236 ? 0.1 : x < 243 ? 8 + (x - 236) * .25 + nz(.3) : x < 250 ? 13 + nz(.8) : x < 292 ? 10.2 + nz(.8) : x < 305.500 ? 22.500 + nz(.9) : x < 318 ? 9.4 + nz(.8) : 9.9 + nz(.8));
}
// disabled piezo sliders
document.querySelectorAll('.piezoSlider').forEach(s => {
  rect(s, 2, 0, 98, 16, '#b8b8b8'); rect(s, 0, 35, 172, 22, '#b8b8b8');
  text(s, 5, 8.500, `Piezo Pos ${s.dataset.axis} (in %)`, 'start', 'off');
  rect(s, 3, 22, 167, 12, '#cacaca', { rx: 6 });
  rect(s, 5, 23, 164, 10, '#9696a0', { rx: 5 });
  rect(s, 5, 23, 86, 10, '#7888cc', { rx: 5 });
  thumb(s, 81, 15, 13, 18, { opacity: .75 });
  for (let v = -50; v <= 50; v += 5) { const x = 10.5 + (v + 50) * 1.545; path(s, `M${x.toFixed(1)} 37v${v % 10 && v % 50 ? 3 : 5}`, '#777'); }
  [[-50, 10], [-20, 56], [0, 87], [20, 118], [40, 149], [50, 164]].forEach(([v, x]) => text(s, x, 49.500, v, 'middle', 'n off'));
});
// scan map
{
  const s = document.getElementById('bigMap');
  frame(s, 9, 16, 549, 519);
  plotEdge(s, 74, 29, 460, 461);
  for (let i = 0; i <= 90; i++) { const y = 29.500 + i * 5.11; if (y > 490) break; path(s, `M${i % 5 ? 69 : 67} ${y.toFixed(1)}H72`); if (i % 5 === 0) text(s, 65, y, String(-9 - i / 10).replace('.', ','), 'end', 'n'); }
  for (let i = 0; i <= 45; i++) { const x = 534.500 - i * 10.2; path(s, `M${x.toFixed(1)} 493v${i % 5 ? 3 : 5}`); if (i % 5 === 0) text(s, x - .5, 504, 14 - i / 5, 'middle', 'n'); }
  rot(s, 28, 261, 'Y Coordinate [µm]', -90, 98);
  rect(s, 570, 15, 20, 520, '#000'); rect(s, 571, 16, 18, 3, '#fff'); rect(s, 571, 21, 18, 513, 'url(#heatScale)');
  const lab = [[61, 21.500]]; for (let i = 0; i <= 21; i++) lab.push([57.5 - i * 2.500, 51.500 + i * 21.14]); lab.push([1, 529.500]);
  lab.forEach(([v, y]) => { path(s, `M592 ${y.toFixed(1)}h5`); text(s, 598, y, v.toFixed(1).replace('.', ','), 'start', 'n'); });
  path(s, 'M592 29.500h4M592 516.500h4');
  rot(s, 634, 275, 'Counts [kcts/s]', 90, 80);
}
// logarithmic bar graphs
function xy(id, name, x0, pw, W, vals, lx) {
  const s = document.getElementById(id), top = 31, bot = 279, one = 275, dec = 49.1, step = pw / 14;
  frame(s, 0, 21, W, 299);
  frame(s, lx, 0, W - lx, 22);
  rect(s, W - 12, 20, 12, 6, 'url(#frameR)');
  text(s, 6, 11, name); text(s, lx + 15, 11, 'Plot 0', 'start', '', { textLength: 30 });
  rect(s, W - 42, 3, 28, 17, '#000'); rect(s, W - 35, 5, 11, 11, '#fff'); rect(s, W - 41, 15, 26, 1, '#fff');
  plotEdge(s, x0, top, pw, bot - top);
  const Y = v => one - dec * Math.log10(v);
  for (let i = 1; i < 56; i += 1) { const x = x0 + i * step / 2; if (x >= x0 + pw) break; path(s, `M${x.toFixed(1)} ${top}V${bot}`, i % 4 ? '#54540a' : '#a0a010'); }
  for (let d = 0; d < 5; d++) for (const m of [1, 2, 4, 6, 8]) { const y = Math.round(Y(m * 10 ** d)) + .5; path(s, `M${x0} ${y}h${pw}`, m === 1 ? '#a0a010' : '#54540a'); }
  vals.forEach((v, i) => { if (!v) return; const a = Math.max(0, i - .5), b = Math.min(14, i + .5), y = Y(v === 1 ? 1.03 : v); rect(s, x0 + a * step, y, (b - a) * step, bot - y, '#fff', { 'shape-rendering': 'crispEdges' }); });
  ['100000', '10000', '1000', '100', '10'].forEach((t, i) => { const y = Math.round(Y(10 ** (5 - i))) + .5 + (i ? 0 : 1); path(s, `M${x0 - 7} ${y}h5`); text(s, x0 - 8, y, t, 'end', 'n'); });
  path(s, `M${x0 - 7} 279.500h5M${x0 - 5} 274.500h4`); text(s, x0 - 9, 279.500, '1', 'end', 'n');
  for (let i = 0; i <= 14; i += 2) { path(s, `M${(x0 + .5 + i * step).toFixed(1)} 283v5`); text(s, x0 - .5 + i * step, 295, i, 'middle', 'n'); }
  text(s, x0 + pw / 2 - 1, 312, 'Takt', 'middle'); rot(s, 27, 155, 'Counts', -90, 39);
}
xy('xy1', 'XY-Graph APD 1', 83, 240, 346, [3, 2, 3, 2, 2, 3, 4, 5, 7, 2, 4, 4, 7, 5, 6], 240);
xy('xy2', 'XY-Graph APD 2', 83, 240, 347, [4, 1, 0, 4, 7, 5, 1, 3, 5, 4, 7, 4, 1, 2, 6], 240);

// EOM sliders
document.querySelectorAll('.eomSlider').forEach(s => {
  const h = +s.dataset.h, k = .7877;
  text(s, 5, 8, s.dataset.label);
  rect(s, 2, 26, 816, 7.500, '#a4a4a4', { rx: 3 }); rect(s, 3, 28, 815, 5, '#6a6a82', { rx: 2 }); rect(s, 3, 28, h === 9 ? 408 : 403, 5, '#1848e0', { rx: 1 });
  thumb(s, 403.500, 20, 13, h);
  for (let v = 0; v <= 1020; v += 10) path(s, `M${(8.5 + v * k).toFixed(1)} 37v${v % 50 ? 3 : 5}`);
  path(s, `M${(8.5 + 1023 * k).toFixed(1)} 37v5`);
  for (let v = 0; v <= 950; v += 50) text(s, 7.500 + v * k, 49.500, v, 'middle', 'n');
  text(s, 7.500 + 1023 * k, 49.500, '1023', 'middle', 'n');
});

// intensity maps
const mix = (stops, v) => { v = Math.max(0, Math.min(1, v)); for (let i = 1; i < stops.length; i++) if (v <= stops[i][0]) { const [a, ca] = stops[i - 1], [b, cb] = stops[i], t = (v - a) / (b - a); return ca.map((c, j) => c + (cb[j] - c) * t); } return stops[stops.length - 1][1]; };
const blue = [[0, [0, 0, 0]], [.5, [0, 0, 255]], [1, [255, 255, 255]]];
const kon = [[0, [0, 0, 0]], [.03, [30, 0, 56]], [.12, [0, 0, 110]], [.5, [0, 64, 228]], [.85, [124, 124, 255]], [1, [255, 255, 255]]];
const sm = (a, b, x) => { x = Math.max(0, Math.min(1, (x - a) / (b - a))); return x * x * (3 - 2 * x); };
const fields = {
  1: (u, v) => { const p = v - 1.03 * u; const c = .5 + .5 * Math.cos(2 * Math.PI * (p - .26) / .86); const hi = .77 + .16 * sm(.4, 1, u) * sm(.5, 1, v) * (p > -.2 ? 1 : 0) - .05 * sm(.6, .9, p) - .04 * sm(0, -.5, p); const lo = -.02 + .17 * sm(.2, .6, p) + .1 * sm(-.5, -.9, p); return lo + (hi - lo) * c; },
  2: (u, v) => { const p = v - 1.03 * u; const c = .5 + .5 * Math.cos(2 * Math.PI * (p + .14) / .8); const hi = .84 + .08 * sm(.4, 1, u) - .14 * sm(.1, .4, p) + .1 * sm(.5, .8, v) * sm(.2, .5, u) * (p > .3 ? 1 : 0) - .12 * sm(-.5, -.8, p); const lo = -.02 + .08 * sm(.3, .9, p); return lo + (hi - lo) * c; },
  3: (u, v) => { const p = v - .98 * u; const w = Math.abs(Math.sin(Math.PI * (p - .015) / .395)); let hi = p > .8 ? .5 : p > .41 ? .5 + .12 * u : p > .015 ? .62 + .1 * u : p > -.38 ? .7 : p > -.77 ? .7 : .6; let r = hi * Math.pow(w, .72) + .01; if (p < 0 && p > -.38) { const q = (p + .175) / .022; r += .13 * Math.exp(-q * q) * sm(.22, .34, u) * sm(.84, .7, u) + .08 * Math.exp(-Math.pow((p + .18) / .06, 2)); } return r; }
};
document.querySelectorAll('.map').forEach(m => {
  const id = +m.dataset.map, base = m.querySelector('.base'), over = m.querySelector('.over'), cv = m.querySelector('canvas');
  const W = +base.getAttribute('width'), px = id === 3 ? 62 : 63, py = id === 3 ? 31 : 29, k = .271;
  text(base, 2, 11, ['', 'Intensitätsgraph APD 1 -- entspricht Bit 0', 'Intensitätsgraph APD 2 -- entspricht Bit 1', 'Kontrast'][id], 'start', '', id === 3 ? {} : { textLength: 216 });
  frame(base, 0, py - 10, W - 1, 277); plotEdge(base, px, py, 226, 225);
  const Y = v => py + 224.5 - (v - 90) * .2675, X = v => px - .5 + (v - 100) * k;
  [90, 200, 300, 400, 500, 600, 700, 800, 930].forEach(v => { path(base, `M${px - 7} ${Y(v).toFixed(1)}h5`); text(base, px - 9, Y(v), v, 'end', 'n'); });
  path(base, `M${px - 7} ${Y(900).toFixed(1)}h5M${px - 7} ${Y(100).toFixed(1)}h5`);
  [100, 200, 300, 400, 500, 600, 700, 800, 900, 930].forEach(v => { path(base, `M${X(v).toFixed(1)} ${py + 228}v5`); if (v !== 900) text(base, X(v) - .5, py + 241, v, 'middle', 'n'); });
  text(base, px + 112, py + 258, 'Wert EOM 1', 'middle'); rot(base, 24, py + 113, 'Wert EOM 2', -90);
  cv.width = 84; cv.height = 85;
  const g = cv.getContext('2d'), im = g.createImageData(84, 85);
  for (let j = 0; j < 85; j++) for (let i = 0; i < 84; i++) {
    const u = (i + .5) / 84, v = 1 - (j + .5) / 85;
    let z = fields[id](u, v) + (rnd() - .5) * (id === 3 ? .02 : .035 * (.3 + fields[id](u, v)));
    if (i === 0) z = rnd() < .5 ? z * .35 : id === 3 ? z * .5 : z * .9;
    const c = mix(id === 3 ? kon : blue, z), o = 4 * (j * 84 + i);
    im.data[o] = c[0]; im.data[o + 1] = c[1]; im.data[o + 2] = c[2]; im.data[o + 3] = 255;
  }
  g.putImageData(im, 0, 0);
  const cx = px + 100, cy = py + 113;
  path(over, `M${cx} ${py}V${py + 225}M${px} ${cy}H${px + 226}`, '#66ff00', { 'stroke-width': 2 });
  rect(over, cx - 2, cy - 2, 4, 4, '#001040', { stroke: '#66ff00' });
});
// colour scales
function bar(id, grad, y0, labels, ticks, title, ty, tx) {
  const s = document.getElementById(id), w = 20;
  rect(s, 2, y0, w, 150, '#000'); rect(s, 3, y0 + 1, w - 2, 3, '#fff'); rect(s, 3, y0 + 6, w - 2, 143, `url(#${grad})`);
  labels.forEach(([t, y]) => { path(s, `M24 ${y + .5}h4`); text(s, 29, y, t, 'start', 'n'); });
  ticks.forEach(y => path(s, `M24 ${y}h4`));
  rot(s, tx, ty, title, 90, title === 'Kontrast in %' ? 70 : 54);
}
bar('bar1', 'scaleLow', 19, [['8232', 26], ['120', 163]], [157.5, 161.500], 'Counts / s', 94, 67);
bar('bar2', 'scaleBlue', 19, [['7933', 26], ['356', 163]], [33.500], 'Counts / s', 94, 67);
bar('bar3', 'scaleK', 21, [['100', 28], ['89', 43], ['50', 96], ['11', 150], ['0', 165]], [], 'Kontrast in %', 95, 63);
```
